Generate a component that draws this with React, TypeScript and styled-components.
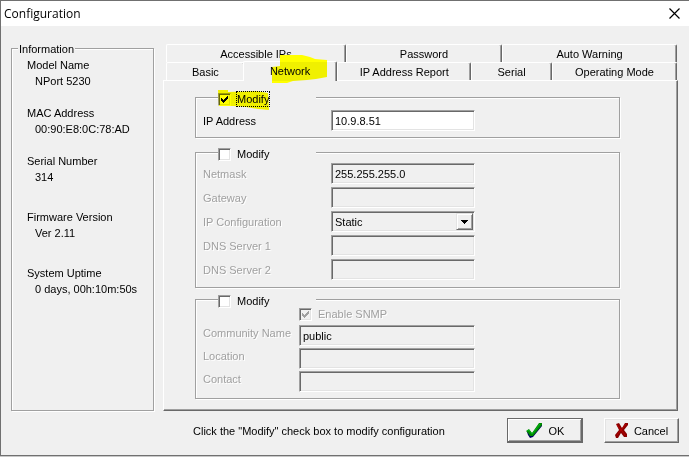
import React from "react";
import styled, { createGlobalStyle, css } from "styled-components";

const face = "#f0f0f0";
const shadow = "#a0a0a0";
const dark = "#696969";
const light = "#e3e3e3";

const GlobalStyle = createGlobalStyle`
  *, *::before, *::after { box-sizing: border-box; }
  body {
    margin: 0;
    background: #c8c8c8;
    color: #000;
    font: 11px/16px "Liberation Sans", Arial, sans-serif;
  }
  input, select, button { font: inherit; color: inherit; margin: 0; }
`;

const sunken = css`
  border: 1px solid;
  border-color: ${shadow} #fff #fff ${shadow};
  border-radius: 0;
  box-shadow: inset 1px 1px 0 ${dark}, inset -1px -1px 0 ${light};
`;

const Dialog = styled.main`
  background: ${face};
  border: 1px solid #707070;
  border-right: 0;
`;

const TitleBar = styled.header`
  display: flex;
  align-items: center;
  justify-content: space-between;
  height: 25px;
  padding: 0 9px 0 3px;
  background: #fff;
`;

const Title = styled.h1`
  margin: 0;
  font: 12px/16px "Open Sans", "Noto Sans", sans-serif;
`;

const CloseButton = styled.button`
  display: flex;
  padding: 0;
  border: 0;
  background: none;
`;

const Content = styled.div`
  display: grid;
  grid-template-columns: 143px minmax(0, 1fr);
  gap: 9px;
  padding: 15px 11px 0 10px;
`;

const Group = styled.fieldset`
  min-width: 0;
  margin: 0;
  padding: 0;
  border: 1px solid ${shadow};
  box-shadow: 1px 1px 0 #fff, inset 1px 1px 0 #fff;
`;

const InfoLegend = styled.legend`
  height: 14px;
  margin-left: 6px;
  padding: 0 1px;
  background: ${face};
`;

const InfoList = styled.dl`
  display: flex;
  flex-direction: column;
  gap: 16px;
  margin: 0;
  padding: 2px 0 0 15px;
`;

const InfoItem = styled.div<{ $spaced?: boolean }>`
  padding-top: ${(p) => (p.$spaced ? 8 : 0)}px;
  white-space: nowrap;
`;

const InfoValue = styled.dd`
  margin: 0 0 0 8px;
`;

const TabArea = styled.section`
  padding-top: 3px;
`;

const TabRow = styled.div`
  display: flex;
  padding: 0 1px 0 3px;
`;

const Tab = styled.button<{ $share: number; $active?: boolean }>`
  position: relative;
  flex: ${(p) => p.$share} 1 0;
  height: ${(p) => (p.$active ? 20 : 18)}px;
  margin: ${(p) => (p.$active ? "-1px 0 -1px -2px" : "0")};
  padding: ${(p) => (p.$active ? "0 0 2px" : "0")};
  border: solid;
  border-width: 1px 1px 0;
  border-color: #fff ${dark} #fff #fff;
  border-radius: 2px 2px 0 0;
  background: ${face};
  box-shadow: inset -1px 0 0 ${shadow};
  white-space: nowrap;
  z-index: ${(p) => (p.$active ? 1 : 0)};
`;

const Panel = styled.div`
  padding: 9px 57px 11px 31px;
  border: 1px solid;
  border-color: #fff ${dark} ${dark} #fff;
  box-shadow: inset -1px -1px 0 ${shadow};
`;

const Settings = styled(Group)<{ $after?: number }>`
  margin-bottom: ${(p) => p.$after ?? 0}px;
`;

const SettingsLegend = styled.legend`
  position: relative;
  width: 98px;
  height: 14px;
  margin-left: 22px;
  padding: 1px 0 0;
  background: ${face};
`;

const CheckLabel = styled.label<{ $disabled?: boolean }>`
  display: flex;
  align-items: center;
  gap: 5px;
  height: 16px;
  ${(p) => p.$disabled && css`
    color: ${shadow};
    text-shadow: 1px 1px 0 #fff;
  `}
`;

const CheckText = styled.span<{ $focused?: boolean }>`
  padding: 0 1px;
  outline: ${(p) => (p.$focused ? "1px dotted #000" : "none")};
  outline-offset: -1px;
`;

const CheckBoxFrame = styled.span`
  position: relative;
  display: flex;
  width: 13px;
  height: 13px;
`;

const CheckBox = styled.input`
  ${sunken}
  appearance: none;
  width: 13px;
  height: 13px;
  background: #fff;
  &:disabled { background: ${face}; }
`;

const Tick = styled.svg<{ $disabled?: boolean }>`
  position: absolute;
  inset: 0;
  pointer-events: none;
  fill: ${(p) => (p.$disabled ? shadow : "#000")};
`;

const Highlight = styled.svg`
  position: absolute;
  overflow: visible;
  mix-blend-mode: multiply;
  pointer-events: none;
  fill: #ff0;
`;

const TabHighlight = styled(Highlight)`
  left: 28px;
  top: -7px;
`;

const CheckHighlight = styled(Highlight)`
  left: 0;
  top: 0;
`;

const Rows = styled.div<{ $gap: number; $top: number; $bottom: number }>`
  display: flex;
  flex-direction: column;
  gap: ${(p) => p.$gap}px;
  padding: ${(p) => p.$top}px 8px ${(p) => p.$bottom}px 7px;
`;

const Row = styled.div<{ $wide?: boolean }>`
  display: grid;
  grid-template-columns: ${(p) => (p.$wide ? "96px 176px" : "128px 144px")};
  align-items: center;
  white-space: nowrap;
`;

const CheckRow = styled.div`
  display: flex;
  padding-left: 96px;
  margin-bottom: 1px;
`;

const FieldLabel = styled.label<{ $disabled?: boolean; $raised?: boolean }>`
  padding-bottom: ${(p) => (p.$raised ? 5 : 0)}px;
  ${(p) => p.$disabled && css`
    color: ${shadow};
    text-shadow: 1px 1px 0 #fff;
  `}
`;

const Input = styled.input`
  ${sunken}
  width: 100%;
  height: 21px;
  padding: 0 3px;
  background: #fff;
  &:disabled { background: ${face}; color: #000; }
`;

const SelectFrame = styled.span`
  position: relative;
  display: flex;
`;

const Select = styled.select`
  ${sunken}
  appearance: none;
  width: 100%;
  height: 21px;
  padding: 0 20px 0 3px;
  background: ${face};
  &:disabled { color: #000; opacity: 1; }
`;

const SelectArrow = styled.span`
  position: absolute;
  top: 2px;
  right: 2px;
  bottom: 2px;
  display: flex;
  align-items: center;
  justify-content: center;
  width: 17px;
  border: 1px solid;
  border-color: ${light} ${dark} ${dark} ${light};
  box-shadow: inset 1px 1px 0 #fff, inset -1px -1px 0 ${shadow};
  background: ${face};
  pointer-events: none;
`;

const Footer = styled.footer`
  display: flex;
  align-items: center;
  gap: 21px;
  padding: 7px 10px 12px 192px;
`;

const Hint = styled.p`
  flex: 1;
  margin: 0;
`;

const PushButton = styled.button<{ $default?: boolean }>`
  display: flex;
  align-items: center;
  justify-content: center;
  gap: 6px;
  width: ${(p) => (p.$default ? 76 : 75)}px;
  height: 25px;
  padding: 0;
  border: 1px solid;
  border-color: ${(p) => (p.$default ? dark : `#fff ${dark} ${dark} #fff`)};
  background: ${face};
  box-shadow: ${(p) =>
    p.$default
      ? `inset -1px -1px 0 ${dark}, inset 1px 1px 0 #fff, inset -2px -2px 0 ${shadow}`
      : `inset -1px -1px 0 ${shadow}, inset 1px 1px 0 ${light}`};
`;

const info = [
  { name: "Model Name", value: "NPort 5230" },
  { name: "MAC Address", value: "00:90:E8:0C:78:AD" },
  { name: "Serial Number", value: "314" },
  { name: "Firmware Version", value: "Ver 2.11", spaced: true },
  { name: "System Uptime", value: "0 days, 00h:10m:50s", spaced: true },
];

const backTabs = [
  { name: "Accessible IPs", share: 180 },
  { name: "Password", share: 156 },
  { name: "Auto Warning", share: 175 },
];

const frontTabs = [
  { name: "Basic", share: 78 },
  { name: "Network", share: 94, active: true },
  { name: "IP Address Report", share: 134 },
  { name: "Serial", share: 80 },
  { name: "Operating Mode", share: 125 },
];

interface CheckProps {
  label: string;
  checked?: boolean;
  disabled?: boolean;
  focused?: boolean;
}

function Check({ label, checked, disabled, focused }: CheckProps) {
  return (
    <CheckLabel $disabled={disabled}>
      <CheckBoxFrame>
        <CheckBox type="checkbox" defaultChecked={checked} disabled={disabled} />
        {checked && (
          <Tick $disabled={disabled} width="13" height="13" viewBox="0 0 13 13" shapeRendering="crispEdges" aria-hidden="true">
            <path d="M3 5h1v1h1v1h1v-1h1v-1h1v-1h1v-1h1v3h-1v1h-1v1h-1v1h-1v1h-1v-1h-1v-1h-1z" />
          </Tick>
        )}
      </CheckBoxFrame>
      <CheckText $focused={focused}>{label}</CheckText>
    </CheckLabel>
  );
}

interface FieldProps {
  id: string;
  label: string;
  value?: string;
  disabled?: boolean;
  wide?: boolean;
}

function Field({ id, label, value = "", disabled, wide }: FieldProps) {
  return (
    <Row $wide={wide}>
      <FieldLabel htmlFor={id} $disabled={disabled} $raised={wide}>{label}</FieldLabel>
      <Input id={id} type="text" defaultValue={value} disabled={disabled} />
    </Row>
  );
}

export default function App() {
  return (
    <>
      <GlobalStyle />
      <Dialog>
        <TitleBar>
          <Title>Configuration</Title>
          <CloseButton type="button" aria-label="Close">
            <svg width="11" height="11" viewBox="0 0 11 11" stroke="#000" strokeWidth="1.2">
              <path d="M.5.5l10 10M10.5.5l-10 10" />
            </svg>
          </CloseButton>
        </TitleBar>

        <Content>
          <Group>
            <InfoLegend>Information</InfoLegend>
            <InfoList>
              {info.map((item) => (
                <InfoItem key={item.name} $spaced={item.spaced}>
                  <dt>{item.name}</dt>
                  <InfoValue>{item.value}</InfoValue>
                </InfoItem>
              ))}
            </InfoList>
          </Group>

          <TabArea>
            <TabRow>
              {backTabs.map((tab) => (
                <Tab key={tab.name} type="button" $share={tab.share}>{tab.name}</Tab>
              ))}
            </TabRow>
            <TabRow>
              {frontTabs.map((tab) => (
                <Tab key={tab.name} type="button" $share={tab.share} $active={tab.active}>
                  {tab.name}
                  {tab.active && (
                    <TabHighlight width="55" height="28" viewBox="0 0 55 28" aria-hidden="true">
                      <path d="M8 0H30L38 2L43 4L55 5V22L44 24L35 25L21 26L15 28H0V12L8 11Z" />
                    </TabHighlight>
                  )}
                </Tab>
              ))}
            </TabRow>

            <Panel>
              <Settings $after={7}>
                <SettingsLegend>
                  <Check label="Modify" checked focused />
                  <CheckHighlight width="51" height="20" viewBox="0 0 51 20" aria-hidden="true">
                    <path d="M0 0H10V2L38 1L50 3L51 20L40 19L28 17L16 16H1Z" />
                  </CheckHighlight>
                </SettingsLegend>
                <Rows $gap={3} $top={6} $bottom={6}>
                  <Field id="ip" label="IP Address" value="10.9.8.51" />
                </Rows>
              </Settings>

              <Settings $after={4}>
                <SettingsLegend>
                  <Check label="Modify" />
                </SettingsLegend>
                <Rows $gap={3} $top={4} $bottom={7}>
                  <Field id="netmask" label="Netmask" value="255.255.255.0" disabled />
                  <Field id="gateway" label="Gateway" disabled />
                  <Row>
                    <FieldLabel htmlFor="ip-config" $disabled>IP Configuration</FieldLabel>
                    <SelectFrame>
                      <Select id="ip-config" defaultValue="Static" disabled>
                        <option>Static</option>
                      </Select>
                      <SelectArrow>
                        <svg width="7" height="4" viewBox="0 0 7 4" shapeRendering="crispEdges" aria-hidden="true">
                          <path d="M0 0h7v1h-1v1h-1v1h-1v1h-1v-1h-1v-1h-1v-1h-1z" />
                        </svg>
                      </SelectArrow>
                    </SelectFrame>
                  </Row>
                  <Field id="dns1" label="DNS Server 1" disabled />
                  <Field id="dns2" label="DNS Server 2" disabled />
                </Rows>
              </Settings>

              <Settings>
                <SettingsLegend>
                  <Check label="Modify" />
                </SettingsLegend>
                <Rows $gap={2} $top={0} $bottom={6}>
                  <CheckRow>
                    <Check label="Enable SNMP" checked disabled />
                  </CheckRow>
                  <Field id="community" label="Community Name" value="public" disabled wide />
                  <Field id="location" label="Location" disabled wide />
                  <Field id="contact" label="Contact" disabled wide />
                </Rows>
              </Settings>
            </Panel>
          </TabArea>
        </Content>

        <Footer>
          <Hint>Click the "Modify" check box to modify configuration</Hint>
          <PushButton type="button" $default>
            <svg width="17" height="15" viewBox="0 0 17 15" aria-hidden="true">
              <path d="M1 9L4 8L6 11L14 1L16 1V3L7 14L4 15L2 12Z" fill="#000060" />
              <path d="M0 8L3 6L6 10L13 0H16V2L7 13H4L2 10Z" fill="#008a00" />
              <path d="M1 8L3 7L6 11L14 1" fill="none" stroke="#00b818" strokeWidth="1" />
            </svg>
            OK
          </PushButton>
          <PushButton type="button">
            <svg width="13" height="15" viewBox="0 0 13 15" aria-hidden="true">
              <path d="M1 1L4 0L7 5L10 0H13V2L9 7L12 11V14H9L6 10L3 15H1L0 12L4 7Z" fill="#8b0000" />
              <path d="M2 2L7 8L10 12M11 1L6 7L2 12" fill="none" stroke="#b80000" strokeWidth="1" />
            </svg>
            Cancel
          </PushButton>
        </Footer>
      </Dialog>
    </>
  );
}
